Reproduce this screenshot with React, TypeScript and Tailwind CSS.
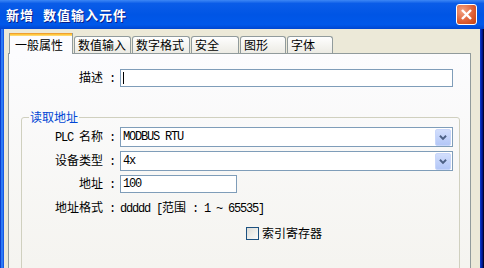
import React from "react";

const cjk = "font-['Noto_Sans_CJK_SC','Noto_Sans',sans-serif]";
const mono = "font-['Liberation_Mono','Noto_Sans_CJK_SC',monospace] text-[12px] tracking-[-1.2px]";

function Colon() {
  return <span className={mono}> :</span>;
}

function Chevron() {
  return (
    <svg width="16" height="17" viewBox="0 0 16 17">
      <polyline points="4.5,6.5 8,10 11.5,6.5" fill="none" stroke="#4d6185" strokeWidth="2.2" />
    </svg>
  );
}

function Select({ value }: { value: string }) {
  return (
    <div className="ml-[5px] flex h-[20px] w-[333px] items-center border border-[#7f9db9] bg-white pl-[2px] pr-[1px]">
      <span className={`${mono} flex-1`}>{value}</span>
      <div className="flex h-[17px] w-[16px] items-center justify-center rounded-[2px] border border-[#c8d6fa] bg-[linear-gradient(180deg,#d2defc,#b3c7f7)]">
        <Chevron />
      </div>
    </div>
  );
}

const tabs = [
  { label: "数值输入", w: "w-[57px]" },
  { label: "数字格式", w: "w-[58px]" },
  { label: "安全", w: "w-[48px]" },
  { label: "图形", w: "w-[46px]" },
  { label: "字体", w: "w-[46px]" },
];

export default function App() {
  return (
    <div className={`flex h-[268px] w-[484px] flex-col overflow-hidden ${cjk} text-[12px] leading-[14px] text-black`}>
      {/* Title bar */}
      <div className="flex h-[29px] shrink-0 items-center bg-[linear-gradient(180deg,#3d87f5_0%,#0a5ce8_12%,#0055e5_50%,#0058ea_85%,#0046d0_100%)] pl-[6px] pr-[7px]">
        <div className="flex flex-1 items-center text-[13px] font-bold tracking-[1px] text-white [text-shadow:1px_1px_0_#0a1e8a]">
          <span>新增</span>
          <span className="ml-[9px]">数值输入元件</span>
        </div>
        <div className="flex h-[21px] w-[21px] items-center justify-center rounded-[3px] border border-white bg-[radial-gradient(circle_at_30%_30%,#f4a383,#dc5c32_60%,#c2410f)]">
          <svg width="19" height="19" viewBox="0 0 19 19">
            <line x1="5" y1="5" x2="14" y2="14" stroke="white" strokeWidth="2.4" />
            <line x1="14" y1="5" x2="5" y2="14" stroke="white" strokeWidth="2.4" />
          </svg>
        </div>
      </div>

      <div className="flex min-h-0 flex-1">
        <div className="w-[4px] shrink-0 bg-[linear-gradient(90deg,#0a3fcf_0%,#0a3fcf_25%,#2d7af5_25%,#2d7af5_75%,#155ae6_75%)]" />
        <div className="flex flex-1 flex-col bg-[#ece9d8] pl-[4px] pr-[9px] pt-[4px]">
          {/* Tabs */}
          <div className="flex h-[20px] shrink-0 items-end pl-[1px]">
            <div className="relative z-10 mb-[-1px] flex h-[21px] w-[64px] flex-col border-x border-[#919b9c] bg-[#fcfcfe]">
              <div className="h-[3px] bg-[linear-gradient(180deg,#e68b2c,#ffc73c_50%,#fedf85)]" />
              <div className="flex flex-1 items-center pl-[5px]">一般属性</div>
            </div>
            {tabs.map((t) => (
              <div
                key={t.label}
                className={`ml-[1px] flex h-[17px] ${t.w} items-center rounded-t-[3px] border-x border-t border-[#919b9c] bg-[linear-gradient(180deg,#fefefe,#ecebe4)] pl-[3px]`}
              >
                {t.label}
              </div>
            ))}
          </div>

          {/* Panel */}
          <div className="h-[240px] shrink-0 border border-[#919b9c] bg-[linear-gradient(180deg,#fcfcfe,#f4f3ee)] pt-[15px]">
            <div className="flex items-center">
              <div className="w-[106px] shrink-0 text-right">
                描述<Colon />
              </div>
              <div className="ml-[5px] flex h-[18px] w-[333px] items-center border border-[#7f9db9] bg-white">
                <div className="ml-[2px] h-[12px] w-[1px] bg-black" />
              </div>
            </div>

            <fieldset className="ml-[12px] mr-[10px] mt-[23px] h-[200px] rounded-[3px] border border-[#d0d0bf]">
              <legend className="ml-[7px] px-[1px] leading-[14px] text-[#0046d5]">读取地址</legend>

              <div className="mt-[3px] flex items-center">
                <div className="w-[93px] shrink-0 text-right">
                  <span className={mono}>PLC </span>名称<Colon />
                </div>
                <Select value="MODBUS RTU" />
              </div>

              <div className="mt-[4px] flex items-center">
                <div className="w-[93px] shrink-0 text-right">
                  设备类型<Colon />
                </div>
                <Select value="4x" />
              </div>

              <div className="mt-[4px] flex items-center">
                <div className="w-[93px] shrink-0 text-right">
                  地址<Colon />
                </div>
                <div className="ml-[5px] flex h-[18px] w-[117px] items-center border border-[#7f9db9] bg-white pl-[2px]">
                  <span className={mono}>100</span>
                </div>
              </div>

              <div className="mt-[8px] flex h-[14px] items-center">
                <div className="w-[93px] shrink-0 text-right">
                  地址格式<Colon />
                </div>
                <div className="ml-[5px] whitespace-pre">
                  <span className={mono}>ddddd [</span>范围<span className={mono}> : 1 ~ 65535]</span>
                </div>
              </div>

              <div className="mt-[11px] flex h-[14px] items-center pl-[224px]">
                <div className="h-[13px] w-[13px] border border-[#1c5180] bg-[linear-gradient(135deg,#dcdcd7,#fbfbf9)]" />
                <span className="ml-[3px]">索引寄存器</span>
              </div>
            </fieldset>
          </div>
        </div>
        <div className="w-[4px] shrink-0 bg-[linear-gradient(90deg,#0a3fd4,#00138c_60%,#000_100%)]" />
      </div>
    </div>
  );
}
